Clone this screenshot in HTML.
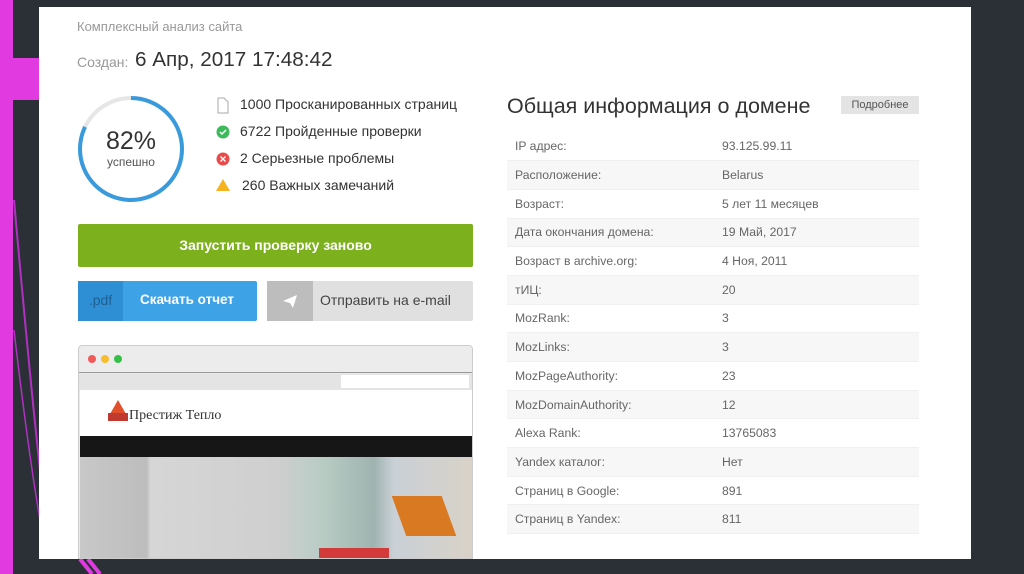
<!DOCTYPE html>
<html><head><meta charset="utf-8"><style>
*{margin:0;padding:0;box-sizing:border-box}
body{width:1024px;height:574px;background:#2b3037;position:relative;overflow:hidden;font-family:"Liberation Sans","DejaVu Sans",sans-serif}
.abs{position:absolute}
#panel{left:39px;top:7px;width:932px;height:552px;background:#fff}
.t{position:absolute;white-space:nowrap}
table{position:absolute;left:507px;top:132px;width:412px;border-collapse:collapse;font-size:12.2px;color:#666}
td{height:28.7px;padding-left:8px;border-bottom:1px solid #f0f0f0}
tr:nth-child(even) td{background:#f7f7f7}
td:nth-child(1){width:215px}
td:nth-child(2){padding-left:0}
</style></head><body>
<div class="abs" style="left:0;top:0;width:13px;height:574px;background:#e03ae0"></div>
<div class="abs" style="left:13px;top:58px;width:26px;height:42px;background:#e03ae0"></div>
<svg class="abs" style="left:0;top:0" width="120" height="574"><path d="M14 200 Q30 380 40 470" stroke="#b030c0" stroke-width="2" fill="none"/><path d="M14 330 Q28 450 40 520" stroke="#b030c0" stroke-width="1.5" fill="none"/><path d="M80 559 L92 574 M88 559 L100 574" stroke="#e03ae0" stroke-width="4"/></svg>
<div id="panel" class="abs"></div>
<div class="t" style="left:77px;top:19px;font-size:13px;color:#999">Комплексный анализ сайта</div>
<div class="t" style="left:77px;top:54px;font-size:14px;color:#999">Создан:</div>
<div class="t" style="left:135px;top:48px;font-size:20.7px;color:#333">6 Апр, 2017 17:48:42</div>
<svg class="abs" style="left:77px;top:95px" width="108" height="108"><circle cx="54" cy="54" r="51" fill="none" stroke="#e6e6e6" stroke-width="4"/><circle cx="54" cy="54" r="51" fill="none" stroke="#3a9bdc" stroke-width="4" stroke-dasharray="262.8 320.4" transform="rotate(-90 54 54)"/></svg>
<div class="t" style="left:77px;top:127px;width:108px;text-align:center;font-size:25px;color:#333">82%</div>
<div class="t" style="left:77px;top:155px;width:108px;text-align:center;font-size:12px;color:#555">успешно</div>
<svg class="abs" style="left:216px;top:97px" width="14" height="100"><path d="M2 1h6l4 4v11H2z" fill="#fff" stroke="#aaa"/><circle cx="7" cy="35" r="6.5" fill="#3dba5a"/><path d="M4 35l2 2 4-4" stroke="#fff" stroke-width="1.5" fill="none"/><circle cx="7" cy="62" r="6.5" fill="#e94b4b"/><path d="M4.5 59.5l5 5m0-5l-5 5" stroke="#fff" stroke-width="1.3"/><path d="M7 82l7 12H0z" fill="#f5b320"/></svg>
<div class="t" style="left:240px;top:96px;font-size:14px;color:#333">1000 Просканированных страниц</div>
<div class="t" style="left:240px;top:123px;font-size:14px;color:#333">6722 Пройденные проверки</div>
<div class="t" style="left:240px;top:150px;font-size:14px;color:#333">2 Серьезные проблемы</div>
<div class="t" style="left:242px;top:177px;font-size:14px;color:#333">260 Важных замечаний</div>
<div class="abs" style="left:78px;top:224px;width:395px;height:43px;background:#7cb01d;border-radius:2px;color:#fff;font-weight:bold;font-size:14px;text-align:center;line-height:43px">Запустить проверку заново</div>
<div class="abs" style="left:78px;top:281px;width:179px;height:40px;background:#3da2e6;border-radius:2px"></div>
<div class="abs" style="left:78px;top:281px;width:45px;height:40px;background:#2e8fd4;color:#1e5f92;font-size:14px;line-height:38px;text-align:center">.pdf</div>
<div class="t" style="left:140px;top:292px;font-size:13.5px;color:#fff;font-weight:bold">Скачать отчет</div>
<div class="abs" style="left:267px;top:281px;width:206px;height:40px;background:#e0e0e0;border-radius:2px"></div>
<div class="abs" style="left:267px;top:281px;width:46px;height:40px;background:#bdbdbd"></div>
<svg class="abs" style="left:282px;top:293px" width="16" height="16"><path d="M1 8L15 2 11 15 8 10z" fill="#fff"/></svg>
<div class="t" style="left:320px;top:292px;font-size:14px;color:#444">Отправить на e-mail</div>
<div class="abs" style="left:78px;top:345px;width:395px;height:214px;border:1px solid #ccc;border-radius:4px 4px 0 0;background:#e9e9e9;overflow:hidden">
 <div class="abs" style="left:0;top:0;width:395px;height:27px;background:#ececec;border-bottom:1px solid #999"></div>
 <div class="abs" style="left:9px;top:9px;width:8px;height:8px;border-radius:50%;background:#f05a5a"></div>
 <div class="abs" style="left:22px;top:9px;width:8px;height:8px;border-radius:50%;background:#f7bd2f"></div>
 <div class="abs" style="left:35px;top:9px;width:8px;height:8px;border-radius:50%;background:#35c048"></div>
 <div class="abs" style="left:0;top:28px;width:395px;height:16px;background:#e4e4e4"></div>
 <div class="abs" style="left:262px;top:29px;width:128px;height:13px;background:#fff"></div>
 <div class="abs" style="left:1px;top:44px;width:392px;height:46px;background:#fff"></div>
 <svg class="abs" style="left:28px;top:52px" width="22" height="26"><path d="M11 2L19 16 3 16z" fill="#e0502a"/><rect x="1" y="15" width="20" height="8" fill="#c03a30"/></svg>
 <div class="t" style="left:50px;top:62px;font-family:'Liberation Serif',serif;font-size:14px;color:#333">Престиж Тепло</div>
 <div class="abs" style="left:1px;top:90px;width:392px;height:21px;background:#161616"></div>
 <div class="abs" style="left:1px;top:111px;width:392px;height:103px;background:linear-gradient(90deg,#c8c8c8 0,#bdbdbd 17%,#d6d6d6 18%,#cfcfcf 50%,#b8ccc4 62%,#9fb3b0 75%,#c9d0d6 80%,#d9d2c8 100%)"></div>
 <div class="abs" style="left:320px;top:150px;width:50px;height:40px;background:#d97a22;transform:skewX(20deg)"></div>
 <div class="abs" style="left:240px;top:202px;width:70px;height:12px;background:#d33b3b"></div>
</div>
<div class="t" style="left:507px;top:94px;font-size:21.5px;color:#333">Общая информация о домене</div>
<div class="abs" style="left:841px;top:96px;width:78px;height:18px;background:#e4e4e4;font-size:11px;color:#555;text-align:center;line-height:18px">Подробнее</div>
<table>
<tr><td>IP адрес:</td><td>93.125.99.11</td></tr>
<tr><td>Расположение:</td><td>Belarus</td></tr>
<tr><td>Возраст:</td><td>5 лет 11 месяцев</td></tr>
<tr><td>Дата окончания домена:</td><td>19 Май, 2017</td></tr>
<tr><td>Возраст в archive.org:</td><td>4 Ноя, 2011</td></tr>
<tr><td>тИЦ:</td><td>20</td></tr>
<tr><td>MozRank:</td><td>3</td></tr>
<tr><td>MozLinks:</td><td>3</td></tr>
<tr><td>MozPageAuthority:</td><td>23</td></tr>
<tr><td>MozDomainAuthority:</td><td>12</td></tr>
<tr><td>Alexa Rank:</td><td>13765083</td></tr>
<tr><td>Yandex каталог:</td><td>Нет</td></tr>
<tr><td>Страниц в Google:</td><td>891</td></tr>
<tr><td>Страниц в Yandex:</td><td>811</td></tr>
</table>
</body></html>
